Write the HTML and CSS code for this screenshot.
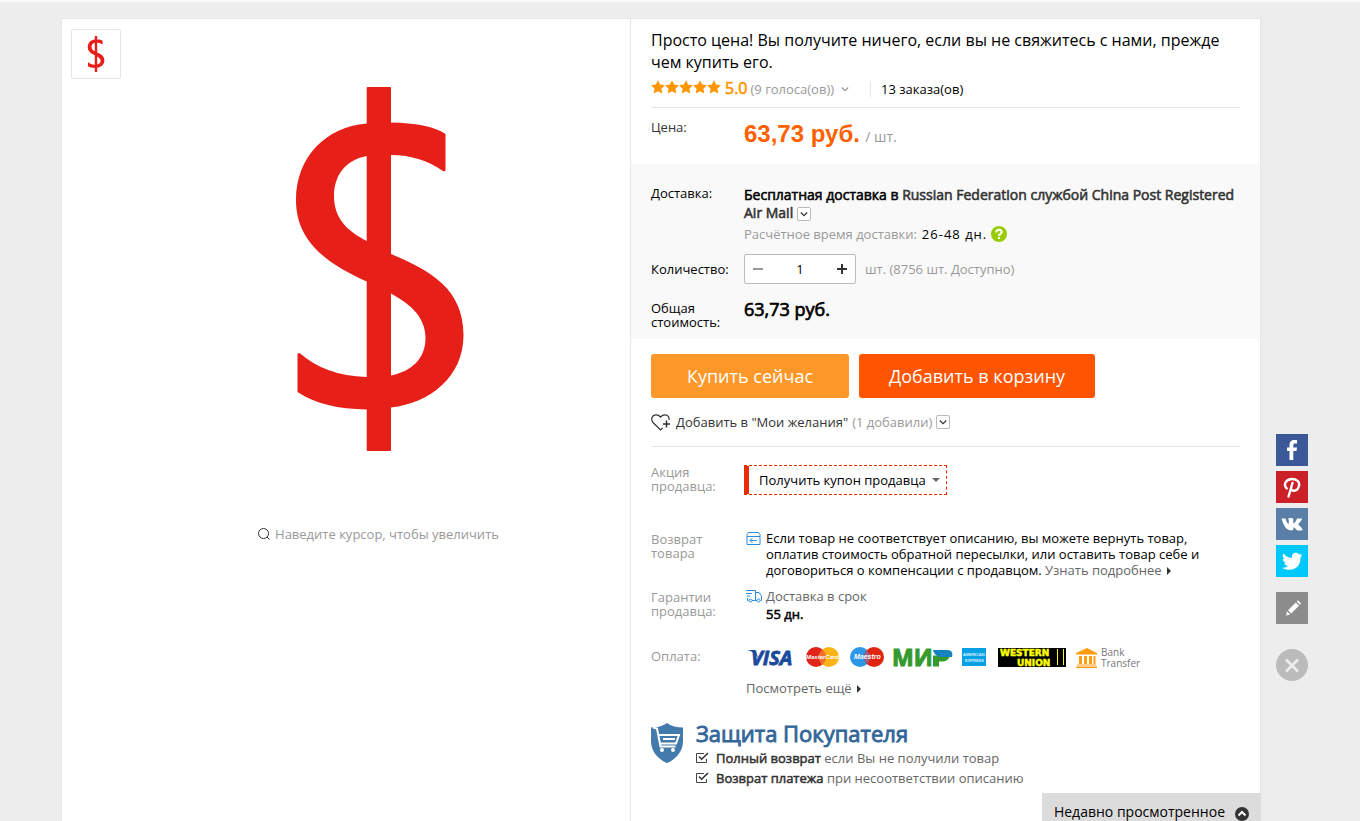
FILE: index.html
```html
<!DOCTYPE html>
<html lang="ru">

<head>
    <meta charset="utf-8">
    <meta name="viewport" content="width=device-width, initial-scale=1.0">
    <title>Просто цена!</title>
    <link rel="stylesheet" href="styles.css">
</head>

<body>
    <!-- shared drawings -->
    <svg class="defs" aria-hidden="true">
        <symbol id="dollar" viewBox="204 87 350 364">
            <path fill="#e71f19" fill-rule="evenodd" d="M391 122.500C415 123 434 126 445.500 134V170q0 2-2.500 1C429 161 411 155 391 155V254C432 271 463.500 290 463.500 335C463.500 377 430 403 391 407.500V450q0 1-1 1H367.700q-1 0-1-1V409.500C338 409 316 404 297.500 392V354q1-1 2-1C317 368 338 376 366.700 377V281.500C325 263 296 240 296 200C296 158 325 127 366.700 123.500V88q0-1 1-1H390q1 0 1 1ZM366.700 156C345 160 334 176 334 196C334 218 347 231 366.700 241ZM391 293.500V375.500C411 371.500 425.500 359 425.500 338C425.500 318 412 305 391 293.500Z" />
        </symbol>
        <symbol id="star" viewBox="0 0 14 14">
            <path fill="#ff9500" d="M7 .3l2.100 4.300 4.800.7-3.500 3.400.9 4.800L7 11.200l-4.300 2.300.9-4.800L.1 5.300 4.900 4.600z" />
        </symbol>
        <symbol id="down" viewBox="0 0 8 8">
            <path fill="none" stroke="currentColor" stroke-width="1.200" d="M.8 2.500L4 5.600l3.200-3.100" />
        </symbol>
        <symbol id="check" viewBox="0 0 13 12">
            <path fill="none" stroke="#444" d="M8 1.500H.5v9h10V7" />
            <path fill="none" stroke="#333" stroke-width="1.600" d="M3 4.500l2.700 2.700L12 1" />
        </symbol>
    </svg>

    <main class="product">
        <!-- gallery -->
        <section class="gallery">
            <button class="thumb" aria-label="Фото 1"><svg><use href="#dollar" /></svg></button>
            <div class="photo">
                <svg class="photo-img"><use href="#dollar" /></svg>
                <p class="hint">
                    <svg viewBox="0 0 12 12"><circle cx="5.500" cy="5.500" r="5" /><path d="M9 9l2.500 2.500" /></svg>
                    Наведите курсор, чтобы увеличить
                </p>
            </div>
        </section>

        <section class="info">
            <header class="top">
                <h1>Просто цена! Вы получите ничего, если вы не свяжитесь с нами, прежде чем купить его.</h1>
                <div class="rating">
                    <span class="stars">
                        <svg><use href="#star" /></svg><svg><use href="#star" /></svg><svg><use href="#star" /></svg><svg><use href="#star" /></svg><svg><use href="#star" /></svg>
                    </span>
                    <span class="score bold">5.0</span>
                    <span class="votes">(9 голоса(ов))</span>
                    <svg class="arrow"><use href="#down" /></svg>
                    <span class="orders">13 заказа(ов)</span>
                </div>
            </header>

            <div class="row price-row">
                <span class="label dark">Цена:</span>
                <div><span class="price">63,73 руб.</span> <span class="unit">/ шт.</span></div>
            </div>

            <!-- delivery, quantity, total -->
            <div class="order">
                <div class="row">
                    <span class="label black">Доставка:</span>
                    <div>
                        <p class="ship bold">Бесплатная доставка в <a href="#">Russian Federation службой China Post Registered Air Mail</a> <button class="toggle" aria-label="Выбрать доставку"><svg><use href="#down" /></svg></button></p>
                        <p class="eta">Расчётное время доставки: <span class="days">26-48 дн.</span>
                            <svg viewBox="0 0 16 16"><circle cx="8" cy="8" r="8" fill="#9c0" /><path fill="none" stroke="#fff" stroke-width="2" d="M5.300 6.500C5.300 2.800 11 3 10.700 6.200C10.500 8 8 7.800 8 10" /><path fill="#fff" d="M7 11h2v2H7z" /></svg>
                        </p>
                    </div>
                </div>
                <div class="row qty-row">
                    <label class="label black" for="qty">Количество:</label>
                    <div class="qty">
                        <button aria-label="Меньше"><svg viewBox="0 0 10 10"><path stroke="#999" stroke-width="2" d="M0 5h10" /></svg></button>
                        <input id="qty" type="text" value="1">
                        <button aria-label="Больше"><svg viewBox="0 0 10 10"><path stroke="#333" stroke-width="2" d="M0 5h10M5 0v10" /></svg></button>
                    </div>
                    <span class="stock">шт. (8756 шт. Доступно)</span>
                </div>
                <div class="row total-row">
                    <span class="label black">Общая стоимость:</span>
                    <span class="total bold">63,73 руб.</span>
                </div>
            </div>

            <div class="actions">
                <div class="buttons">
                    <button class="buy">Купить сейчас</button>
                    <button class="cart">Добавить в корзину</button>
                </div>
                <div class="wish">
                    <svg class="heart" viewBox="0 0 19 17"><path d="M11.500 14L9.500 16L2 8.500C-.5 5.500 1 .8 5 .8C7 .8 8.500 1.800 9.500 3C10.500 1.800 12 .8 14 .8C17 .8 18.500 3.500 18 6" /><path stroke-width="1.500" d="M12 10h7M15.500 6.500v7" /></svg>
                    <a href="#">Добавить в "Мои желания"</a>
                    <span>(1 добавили)</span>
                    <button class="toggle" aria-label="Списки желаний"><svg><use href="#down" /></svg></button>
                </div>
            </div>

            <!-- seller terms -->
            <div class="terms">
                <div class="row">
                    <span class="label">Акция продавца:</span>
                    <button class="coupon">Получить купон продавца <i class="tri-down"></i></button>
                </div>
                <div class="row returns">
                    <span class="label">Возврат товара</span>
                    <div class="with-icon">
                        <svg viewBox="0 0 16 14"><path d="M1 4.500h13v8H1zM1 4.500v-2L2.500.5h10L14 2.500v2M4 8.500h7M6.500 6L4 8.500 6.500 11" /></svg>
                        <p>Если товар не соответствует описанию, вы можете вернуть товар, оплатив стоимость обратной пересылки, или оставить товар себе и договориться о компенсации с продавцом. <a class="more" href="#">Узнать подробнее <i class="tri-right"></i></a></p>
                    </div>
                </div>
                <div class="row guarantee">
                    <span class="label">Гарантии продавца:</span>
                    <div class="with-icon">
                        <svg viewBox="0 0 16 14"><path d="M0 1.500h9.500v10H6M0 4.500h6M1 7h3M1.500 9v2.500h1M9.500 3.500H13L15.500 7v4.500h-1M9.500 11.500h1.500" /><circle cx="4.500" cy="11.500" r="1.500" /><circle cx="12.500" cy="11.500" r="1.500" /></svg>
                        <p><span class="gray">Доставка в срок</span><br><b class="bold">55 дн.</b></p>
                    </div>
                </div>
                <div class="row">
                    <span class="label pay-label">Оплата:</span>
                    <div class="pay">
                        <svg class="pay-logos" viewBox="0 -2 400 28" role="img" aria-label="Способы оплаты">
                            <text x="5" y="19" font-size="20" font-weight="bold" font-style="italic" fill="#1a4a9c" stroke="#1a4a9c" stroke-width=".8" font-family="Open Sans, sans-serif">VISA</text>
                            <path fill="#1a4a9c" d="M1 4h8l4 9C10 8 7 5.500 1 4z" />
                            <circle cx="70" cy="11" r="10" fill="#e2231a" /><circle cx="83" cy="11" r="10" fill="#fbb413" />
                            <path fill="#f0702c" d="M76.500 3.400a10 10 0 0 1 0 15.200a10 10 0 0 1 0-15.200z" />
                            <text x="60" y="13" font-size="6" font-weight="bold" font-style="italic" fill="#fff" font-family="Liberation Sans, sans-serif">MasterCard</text>
                            <circle cx="114" cy="11" r="10" fill="#2d98e8" /><circle cx="128" cy="11" r="10" fill="#e02410" />
                            <path fill="#966087" d="M121 3.900a10 10 0 0 1 0 14.200a10 10 0 0 1 0-14.200z" />
                            <text x="108" y="13" font-size="7" font-weight="bold" font-style="italic" fill="#fff" font-family="Liberation Sans, sans-serif">Maestro</text>
                            <text x="146" y="20" font-size="23" font-weight="bold" fill="#349a2e" stroke="#349a2e" font-family="Open Sans, sans-serif">МИ</text>
                            <path fill="#349a2e" d="M187 9.500h17c-1 4-4 6-8 6h-3v5h-6z" />
                            <path fill="#1682bd" d="M187 4h14c5 0 6 3 5 7h-11c-4 0-7-3-8-7z" />
                            <path fill="#08a0e5" d="M216 2h24v18h-24z" />
                            <text x="217" y="10" font-size="4" font-weight="bold" fill="#d7f0ff" font-family="Liberation Sans, sans-serif">AMERICAN</text>
                            <text x="219" y="16" font-size="4" font-weight="bold" fill="#d7f0ff" font-family="Liberation Sans, sans-serif">EXPRESS</text>
                            <path d="M252 2h68v19h-68z" />
                            <g fill="#ff0" stroke="#ff0" stroke-width=".5" font-size="9" font-weight="bold" font-family="DejaVu Sans, sans-serif"><text x="254" y="9.500">WESTERN</text><text x="271" y="20">UNION</text></g>
                            <path stroke="#ff0" d="M311.500 3v16M317.500 3v16" />
                            <path fill="#ff9c0f" d="M330 7l11-5 10 5v1.500h-21zM333 10h3v8h-3zM338 10h3v8h-3zM343 10h3v8h-3zM347.500 10h2v8h-2zM331 18.500h19v1h-19zM330 20.500h21v1.500h-21z" />
                            <g fill="#777" font-size="10" font-family="Open Sans, sans-serif"><text x="355" y="10">Bank</text><text x="355" y="21">Transfer</text></g>
                        </svg>
                        <a class="more" href="#">Посмотреть ещё <i class="tri-right"></i></a>
                    </div>
                </div>
            </div>

            <div class="protect">
                <svg class="shield" viewBox="0 0 32 40"><path fill="#427aab" d="M16 0C20 3 26 4.500 32 4.500V18C32 29 24 37 16 40C8 37 0 29 0 18V4.500C6 4.500 12 3 16 0z" /><path fill="none" stroke="#fff" stroke-width="2" d="M2 4.500l4 1L9.500 23.500H24.500M7.500 12H28L25 20.500H9.500M12 16h12" /><circle cx="11" cy="27" r="2" fill="#fff" /><circle cx="22" cy="27" r="2" fill="#fff" /></svg>
                <div>
                    <h2 class="bold">Защита Покупателя</h2>
                    <ul>
                        <li><svg><use href="#check" /></svg><span><b class="bold">Полный возврат</b> если Вы не получили товар</span></li>
                        <li><svg><use href="#check" /></svg><span><b class="bold">Возврат платежа</b> при несоответствии описанию</span></li>
                    </ul>
                </div>
            </div>
        </section>

        <button class="recent">Недавно просмотренное <svg viewBox="0 0 14 14"><circle cx="7" cy="7" r="7" fill="#333" /><path fill="none" stroke="#fff" stroke-width="2" d="M3.500 8.500L7 5l3.500 3.500" /></svg></button>
    </main>

    <!-- share buttons -->
    <aside class="share">
        <a class="fb" href="#" aria-label="Facebook"><svg viewBox="0 0 32 32"><path fill="#fff" d="M13.500 26V17H11v-3.500h2.500V11c0-3.500 2-5 4.500-5h3v3.500h-2c-1.300 0-1.700.6-1.700 1.700v2.300h3.700L20.500 17h-3.200v9z" /></svg></a>
        <a class="pin" href="#" aria-label="Pinterest"><svg viewBox="0 0 32 32"><path fill="none" stroke="#fff" stroke-width="2.400" stroke-linecap="round" d="M10.800 17.500C6.500 13 10.500 8 16 8C21 8 24 11 23 15C22 19.500 18 21 15 18.500M16.500 12L12.500 25.500" /></svg></a>
        <a class="vk" href="#" aria-label="VK"><svg viewBox="0 0 32 32"><path fill="#fff" d="M5.500 10.500h4c.8 3 2 5 3.300 5.500V12.500c0-1-.3-1.500-1-1.800c1-.9 5-1 5.500.2V15.500C19 15 20 13 21 10.500h4.800c1 1-3 4.800-3.600 5.800c.7 1.200 4.300 3.800 4.300 5.500c0 1-4 .9-5 .6c-1.300-.4-2.500-3-4.200-3.200V22c-5.500 1.500-9-2-11.800-11.500z" /></svg></a>
        <a class="tw" href="#" aria-label="Twitter"><svg viewBox="0 0 32 32"><path fill="#fff" d="M26.500 10c-.8.400-1.500.6-2.300.7c.8-.6 1.400-1.200 1.700-2.200c-.8.5-1.700.9-2.600 1C20.500 6.200 15 8 16 13c-3.500-.2-6.500-1.800-8.600-4.500c-1.200 2.200-.6 4.300 1.300 5.700c-.7 0-1.300-.2-1.900-.5c0 2 1.400 3.700 3.300 4.200c-.6.200-1.200.2-1.900.1c.6 1.600 2 2.800 3.900 2.900c-1.700 1.300-3.800 2-6.100 1.800C14 27.500 25 24 24.500 12.500c.8-.7 1.500-1.500 2-2.500z" /></svg></a>
        <a class="edit" href="#" aria-label="Отзыв"><svg viewBox="0 0 32 32"><path fill="#fff" d="M10 23.500l1-4.200 3.200 3.200zM12 18.300l7.800-7.800 3.200 3.200-7.800 7.800zM20.700 9.500l1.200-1.200 3.200 3.200-1.200 1.200z" /></svg></a>
        <a class="close" href="#" aria-label="Закрыть"><svg viewBox="0 0 32 32"><path stroke="#eee" stroke-width="2.600" d="M10 10.500l12 12M22 10.500l-12 12" /></svg></a>
    </aside>
</body>

</html>
```
FILE: styles.css
```css
* {
    box-sizing: border-box;
}

body {
    margin: 0;
    padding: 0 38px 0 0;
    min-height: 100vh;
    display: flex;
    flex-direction: column;
    background-color: #ededed;
    border-top: 2px solid #fafafa;
    font-family: 'Open Sans', 'Noto Sans', sans-serif;
    font-size: 13px;
    line-height: 18px;
    color: #000;
}

h1,
h2,
p,
ul {
    margin: 0;
    padding: 0;
    font-weight: normal;
}

a {
    color: inherit;
    text-decoration: none;
}

button,
input {
    font: inherit;
    color: inherit;
    padding: 0;
    border: 0;
    background: none;
}

svg {
    flex: none;
}

.defs {
    display: none;
}

.bold {
    font-weight: normal;
    -webkit-text-stroke: 0.04em;
}

.product {
    position: relative;
    flex: 1;
    width: 100%;
    max-width: 1200px;
    margin: 16px auto 0;
    display: grid;
    grid-template-columns: 568px 1fr;
    background-color: #fff;
    border: 1px solid #e6e6e6;
    border-bottom: 0;
}

/* gallery */
.gallery {
    display: flex;
    align-items: flex-start;
    gap: 6px;
    padding: 10px 0 0 9px;
}

.thumb {
    width: 50px;
    height: 50px;
    border: 1px solid #e6e6e6;
    border-radius: 2px;
}

.thumb svg {
    display: block;
    width: 36px;
    height: 36px;
    margin: auto;
}

.photo {
    flex: 1;
    display: flex;
    flex-direction: column;
    align-items: center;
    padding-top: 58px;
}

.photo-img {
    width: 350px;
    height: 364px;
}

.hint {
    display: flex;
    align-items: center;
    gap: 5px;
    margin-top: 74px;
    color: #999;
}

.hint svg {
    width: 12px;
    height: 12px;
    fill: none;
    stroke: #333;
}

/* product info */
.info {
    border-left: 1px solid #e6e6e6;
}

.top {
    margin: 0 20px;
    padding-top: 10px;
    border-bottom: 1px solid #e6e6e6;
}

h1 {
    font-size: 16px;
    line-height: 22px;
}

.rating {
    display: flex;
    align-items: center;
    height: 34px;
    padding-bottom: 2px;
    color: #999;
}

.stars {
    display: flex;
    padding-bottom: 4px;
}

.stars svg {
    width: 14px;
    height: 14px;
}

.score {
    margin: 0 3px 3px 4px;
    font-size: 16px;
    color: #ff9500;
}

.arrow {
    width: 8px;
    height: 8px;
    margin: 0 21px 0 7px;
}

.orders {
    padding-left: 10px;
    border-left: 1px solid #e6e6e6;
    line-height: 16px;
    color: #000;
}

.row {
    display: flex;
    align-items: flex-start;
}

.label {
    flex: none;
    width: 93px;
    padding-right: 16px;
    line-height: 14px;
    color: #999;
}

.dark {
    color: #333;
}

.black {
    padding-right: 0;
    color: #000;
}

.price-row {
    height: 56px;
    padding: 12px 20px 0;
}

.price {
    font: bold 24px/28px 'Liberation Sans', Arial, sans-serif;
    color: #ff6000;
}

.unit {
    margin-left: 2px;
    font-size: 14px;
    color: #999;
}

.order {
    padding: 20px 20px 10px;
    background-color: #f9f9f9;
}

.order .label {
    padding-top: 2px;
}

.ship {
    font-size: 14px;
    padding-top: 2px;
}

.ship a {
    color: #333;
}

.toggle {
    display: inline-flex;
    align-items: center;
    justify-content: center;
    width: 14px;
    height: 14px;
    border: 1px solid #bbb;
    border-radius: 2px;
    background-color: #fff;
    color: #333;
    vertical-align: middle;
}

.toggle svg {
    display: block;
    width: 8px;
    height: 8px;
}

.eta {
    display: flex;
    align-items: center;
    margin-top: 3px;
    color: #999;
}

.eta svg {
    width: 16px;
    height: 16px;
    margin-left: 4px;
}

.days {
    margin-left: 5px;
    color: #000;
    letter-spacing: 1px;
}

.qty-row {
    align-items: center;
    margin-top: 11px;
}

.order .qty-row .label {
    padding-top: 0;
}

.qty {
    display: flex;
    width: 112px;
    height: 30px;
    margin-right: 9px;
    border: 1px solid #bbb;
    border-radius: 2px;
    background-color: #fff;
}

.qty button {
    width: 26px;
}

.qty button svg {
    display: block;
    width: 10px;
    height: 10px;
    margin: auto;
}

.qty input {
    flex: 1;
    width: 20px;
    text-align: center;
}

.stock {
    color: #999;
}

.total-row {
    margin-top: 15px;
}

.total {
    font-size: 18px;
    line-height: 20px;
}

.actions {
    margin: 0 20px;
    padding-top: 15px;
    border-bottom: 1px solid #e6e6e6;
}

.buttons {
    display: flex;
    gap: 10px;
}

.buy,
.cart {
    width: 198px;
    height: 44px;
    border-radius: 3px;
    background-color: #ff9829;
    font-size: 18px;
    color: #fff;
}

.cart {
    width: 236px;
    background-color: #ff5500;
}

.wish {
    display: flex;
    align-items: center;
    gap: 4px;
    height: 48px;
    color: #999;
}

.wish a {
    color: #333;
}

.heart {
    width: 19px;
    height: 17px;
    margin-right: 2px;
    fill: none;
    stroke: #333;
    stroke-width: 1.2;
}

/* seller terms */
.terms {
    padding: 18px 20px 0;
}

.coupon {
    display: flex;
    align-items: center;
    gap: 6px;
    height: 30px;
    padding: 0 6px 0 10px;
    border: 1px dashed #e62e04;
    border-left: 5px solid #e62e04;
}

.tri-down {
    border: 4px solid transparent;
    border-top-color: #666;
    border-bottom: 0;
}

.tri-right {
    display: inline-block;
    margin-left: 2px;
    border: 4px solid transparent;
    border-left-color: #333;
    border-right: 0;
}

.returns {
    margin-top: 35px;
}

.returns .label {
    padding-top: 2px;
}

.with-icon {
    display: flex;
    align-items: flex-start;
    gap: 4px;
    padding-left: 2px;
}

.with-icon svg {
    width: 16px;
    height: 14px;
    margin-top: 2px;
    fill: none;
    stroke: #2a8ae0;
}

.returns p {
    line-height: 16px;
}

.more,
.gray {
    color: #666;
}

.guarantee {
    margin: 9px 0 21px;
}

.guarantee .label {
    padding-top: 3px;
}

.pay-label {
    padding-top: 5px;
}

.pay-logos {
    display: block;
    width: 400px;
    height: 28px;
    margin: 0 0 7px 2px;
}

.pay .more {
    margin-left: 2px;
}

.protect {
    display: flex;
    gap: 13px;
    margin: 23px 20px 20px;
}

.shield {
    width: 32px;
    height: 40px;
    margin-top: 3px;
}

h2 {
    margin-bottom: 2px;
    font-size: 22px;
    line-height: 26px;
    color: #336699;
}

.protect li {
    display: flex;
    align-items: center;
    gap: 7px;
    line-height: 20px;
    color: #666;
}

.protect li svg {
    width: 13px;
    height: 12px;
}

.protect b {
    color: #333;
}

/* bar at the bottom of the window */
.recent {
    position: absolute;
    right: -1px;
    bottom: 0;
    display: flex;
    align-items: flex-end;
    gap: 10px;
    height: 28px;
    padding: 0 12px;
    background-color: #dcdcdc;
    font-size: 14px;
    line-height: 18px;
}

.recent svg {
    width: 14px;
    height: 14px;
}

.share {
    position: fixed;
    right: 52px;
    bottom: 140px;
    display: flex;
    flex-direction: column;
    gap: 5px;
}

.share a {
    width: 32px;
    height: 32px;
}

.share svg {
    display: block;
}

.fb {
    background-color: #3b5998;
}

.pin {
    background-color: #cb2027;
}

.vk {
    background-color: #5a7fa6;
}

.tw {
    background-color: #00c8fa;
}

.share .edit {
    margin-top: 10px;
    background-color: #8c8c8c;
}

.share .close {
    margin-top: 20px;
    border-radius: 50%;
    background-color: #bbb;
}
```
